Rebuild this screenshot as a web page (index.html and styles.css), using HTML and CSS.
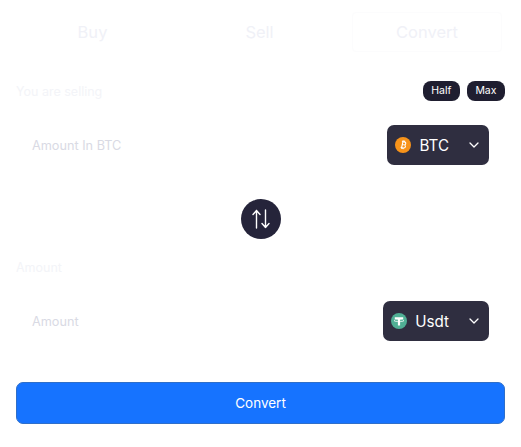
FILE: index.html
```html
<!DOCTYPE html>
<html>
  <head>
    <meta charset="utf-8">
    <title>Convert</title>
    <link rel="stylesheet" href="styles.css">
  </head>
  <body>
    <div class="tabs">
      <div class="tab">Buy</div>
      <div class="tab">Sell</div>
      <div class="tab tab-active">Convert</div>
    </div>

    <div class="label-row label-row-top">
      <span class="field-label">You are selling</span>
      <div class="pills">
        <span class="pill">Half</span>
        <span class="pill">Max</span>
      </div>
    </div>
    <div class="field">
      <span class="placeholder">Amount In BTC</span>
      <div class="coin-select">
        <svg class="coin" viewBox="0 0 16 16">
          <circle cx="8" cy="8" r="8" fill="#f7931a"/>
          <g transform="rotate(12 8 8)">
            <path d="M6.2 4.6h2.6c1 0 1.6.6 1.6 1.5 0 .8-.5 1.3-1.2 1.4.9.1 1.5.7 1.5 1.6 0 1-.7 1.7-1.8 1.7H6.2M7.2 4.6v6.2M7.2 7.6h1.6M7.4 3.4v1.2M8.8 3.4v1.2M7.4 10.8V12M8.8 10.8V12" fill="none" stroke="#fff" stroke-width="1.1"/>
          </g>
        </svg>
        <span class="coin-name">BTC</span>
        <svg class="chevron" viewBox="0 0 10 6">
          <path d="M1 1l4 4 4-4" fill="none" stroke="#fff" stroke-width="1.3" stroke-linecap="round" stroke-linejoin="round"/>
        </svg>
      </div>
    </div>

    <div class="swap-row">
      <div class="swap">
        <svg viewBox="0 0 20 20" width="20" height="20">
          <path d="M5.5 19V1.5M2 5.5l3.5-4 3.5 4M14.5 1v17.5M11 14.5l3.5 4 3.5-4" fill="none" stroke="#fff" stroke-width="1.4" stroke-linecap="round" stroke-linejoin="round"/>
        </svg>
      </div>
    </div>

    <div class="label-row">
      <span class="field-label">Amount</span>
    </div>
    <div class="field">
      <span class="placeholder">Amount</span>
      <div class="coin-select">
        <svg class="coin" viewBox="0 0 16 16">
          <circle cx="8" cy="8" r="8" fill="#50af95"/>
          <path d="M3.8 4.2h8.4v1.9H9.1v6.3H6.9V6.1H3.8z" fill="#fff"/>
          <ellipse cx="8" cy="7.6" rx="5" ry="1.1" fill="none" stroke="#fff" stroke-width=".7"/>
        </svg>
        <span class="coin-name">Usdt</span>
        <svg class="chevron" viewBox="0 0 10 6">
          <path d="M1 1l4 4 4-4" fill="none" stroke="#fff" stroke-width="1.3" stroke-linecap="round" stroke-linejoin="round"/>
        </svg>
      </div>
    </div>

    <button class="convert-button">Convert</button>
  </body>
</html>
```

FILE: styles.css
```css
body {
  margin: 0;
  padding: 12px 16px 0;
  background: #fff;
  font-family: Inter, "Liberation Sans", sans-serif;
  color: #fff;
}

.tabs {
  display: grid;
  grid-template-columns: 1fr 1fr 1fr;
  margin: 0 -5px 0 -7px;
}

.tab {
  height: 40px;
  display: flex;
  align-items: center;
  justify-content: center;
  font-size: 16.5px;
  color: #f0f1f7;
}

.tab-active {
  margin: 0 8px 0 9px;
  border: 1px solid #fcfcfd;
  border-radius: 4px;
  box-sizing: border-box;
}

.label-row {
  display: flex;
  align-items: center;
  justify-content: space-between;
  height: 20px;
}

.label-row-top {
  margin-top: 29px;
}

.field-label {
  font-size: 12.5px;
  color: #f3f4f8;
}

.pills {
  display: flex;
  gap: 7px;
}

.pill {
  background: #1f1e30;
  color: #fff;
  font-size: 10.5px;
  height: 20px;
  line-height: 20px;
  padding: 0 8.5px;
  border-radius: 8px;
}

.field {
  display: flex;
  align-items: center;
  justify-content: space-between;
  height: 40px;
  margin-top: 24px;
  padding: 0 16px;
}

.placeholder {
  font-size: 12.7px;
  color: #d9dae4;
}

.coin-select {
  display: flex;
  align-items: center;
  height: 40px;
  padding: 0 10px 0 8px;
  background: #2f2e40;
  border-radius: 7px;
  box-sizing: border-box;
}

.coin {
  width: 16px;
  height: 16px;
}

.coin-name {
  margin-left: 8px;
  font-size: 15.2px;
  color: #fff;
}

.chevron {
  width: 10px;
  height: 6px;
  margin-left: 20px;
}

.swap-row {
  display: flex;
  justify-content: center;
  margin-top: 34px;
}

.swap {
  width: 40px;
  height: 40px;
  display: flex;
  align-items: center;
  justify-content: center;
  background: #25243a;
  border-radius: 50%;
}

.swap-row + .label-row {
  margin-top: 18px;
}

.convert-button {
  display: block;
  width: 100%;
  height: 42px;
  margin-top: 41px;
  background: #1673ff;
  border: 1px solid #2f6fc9;
  border-radius: 7px;
  color: #fff;
  font-family: inherit;
  font-size: 13.5px;
}
```
